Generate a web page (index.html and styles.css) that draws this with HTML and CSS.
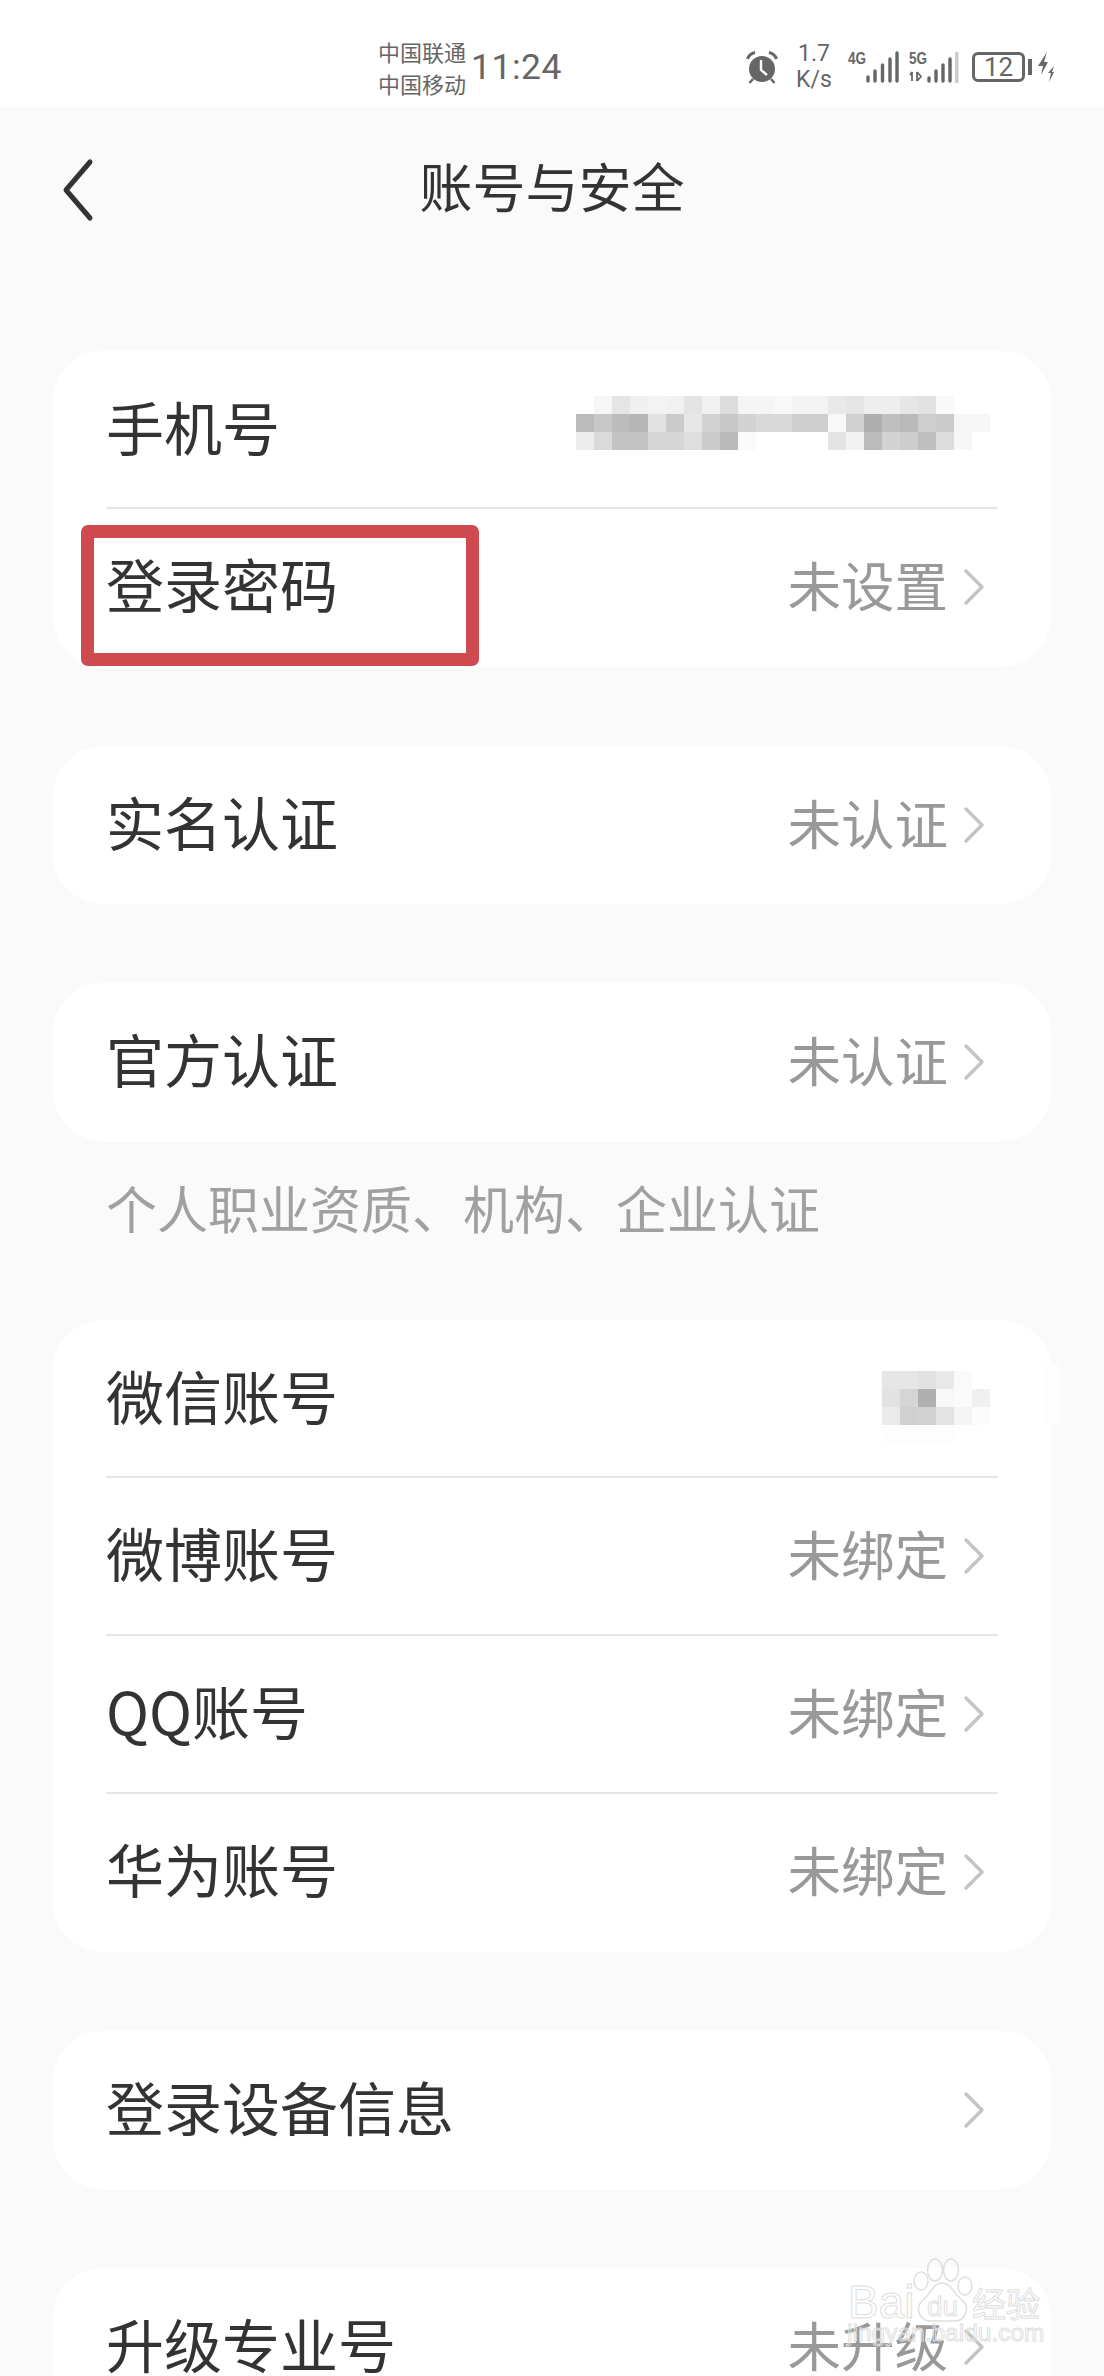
FILE: index.html
```html
<!DOCTYPE html>
<html lang="zh-CN">
<head>
    <meta charset="UTF-8">
    <meta name="viewport" content="width=device-width, initial-scale=1.0">
    <title>账号与安全</title>
    <link rel="stylesheet" href="styles.css">
</head>
<body>
    <div class="phone">
        <!-- 状态栏 -->
        <div class="status-bar">
            <div class="carrier"><span>中国联通</span><span>中国移动</span></div>
            <div class="clock">11:24</div>
            <div class="status-right">
                <svg class="alarm" width="32" height="33" viewBox="0 0 32 33">
                    <circle cx="16" cy="18" r="13" fill="#666"/>
                    <path d="M1.5 8 Q3.5 2.5 9 1.5 M30.5 8 Q28.5 2.5 23 1.5" stroke="#666" stroke-width="3" fill="none"/>
                    <path d="M7 28 L3.5 32 M25 28 L28.5 32" stroke="#666" stroke-width="2.5"/>
                    <path d="M15 9 V19 L21 24" stroke="#fff" stroke-width="2.4" fill="none"/>
                </svg>
                <div class="speed"><span>1.7</span><span>K/s</span></div>
                <svg class="signal" width="113" height="32" viewBox="0 0 113 32">
                    <text x="0" y="13" class="net" textLength="18" lengthAdjust="spacingAndGlyphs">4G</text>
                    <g stroke="#666" stroke-width="3.4" stroke-linecap="round">
                        <path d="M20 30 V26 M27 30 V20 M34.500 30 V14 M42 30 V8 M49 30 V2"/>
                        <path d="M81 30 V27 M88 30 V20 M95 30 V14 M102 30 V8"/>
                    </g>
                    <text x="61" y="13" class="net" textLength="18" lengthAdjust="spacingAndGlyphs">5G</text>
                    <path d="M64 21 V30 M62 24 L64 21 M69 21 V30 M69 21 L73 25.500 L69 30" stroke="#666" stroke-width="1.8" fill="none"/>
                    <rect x="107" y="1" width="3.500" height="31" fill="#ccc"/>
                </svg>
                <div class="battery">12</div>
                <div class="battery-nub"></div>
                <svg class="bolt" width="16" height="30" viewBox="0 0 16 30">
                    <path d="M9 0 L0 14 L5 14 L3 23 L10 10 L6 10 Z M16 14 L10 21 L13 21 L11 30 L16 20 L14 20 Z" fill="#666"/>
                </svg>
            </div>
        </div>

        <!-- 标题 -->
        <div class="title-bar">
            <svg class="back" width="32" height="64" viewBox="0 0 32 64">
                <path d="M28 4 L4 32 L28 60" stroke="#333" stroke-width="5" fill="none" stroke-linecap="round" stroke-linejoin="round"/>
            </svg>
            <h1>账号与安全</h1>
        </div>

        <div class="card">
            <div class="row row-top">
                <span class="label">手机号</span>
                <svg class="mosaic mosaic-phone" width="414" height="54" viewBox="0 0 23 3" shape-rendering="crispEdges">
                    <rect x="1" y="0" width="1" height="1" fill="#f6f6f6"/><rect x="2" y="0" width="1" height="1" fill="#e5e5e5"/><rect x="3" y="0" width="1" height="1" fill="#f0f0f0"/><rect x="4" y="0" width="1" height="1" fill="#f3f3f3"/><rect x="5" y="0" width="1" height="1" fill="#f1f1f1"/><rect x="6" y="0" width="1" height="1" fill="#e4e4e4"/><rect x="7" y="0" width="1" height="1" fill="#f1f1f1"/><rect x="8" y="0" width="1" height="1" fill="#dcdcdc"/><rect x="9" y="0" width="2" height="1" fill="#f5f5f5"/><rect x="11" y="0" width="1" height="1" fill="#f8f8f8"/><rect x="12" y="0" width="2" height="1" fill="#f3f3f3"/><rect x="14" y="0" width="1" height="1" fill="#e9e9e9"/><rect x="15" y="0" width="1" height="1" fill="#e5e5e5"/><rect x="16" y="0" width="2" height="1" fill="#eeeeee"/><rect x="18" y="0" width="1" height="1" fill="#e6e6e6"/><rect x="19" y="0" width="1" height="1" fill="#e2e2e2"/><rect x="20" y="0" width="1" height="1" fill="#f9f9f9"/>
                    <rect x="0" y="1" width="1" height="1" fill="#bbbbbb"/><rect x="1" y="1" width="1" height="1" fill="#c8c8c8"/><rect x="2" y="1" width="1" height="1" fill="#bcbcbc"/><rect x="3" y="1" width="1" height="1" fill="#b6b6b6"/><rect x="4" y="1" width="1" height="1" fill="#e2e2e2"/><rect x="5" y="1" width="1" height="1" fill="#cbcbcb"/><rect x="6" y="1" width="1" height="1" fill="#e7e7e7"/><rect x="7" y="1" width="1" height="1" fill="#d2d2d2"/><rect x="8" y="1" width="1" height="1" fill="#c8c8c8"/><rect x="9" y="1" width="1" height="1" fill="#d3d3d3"/><rect x="10" y="1" width="2" height="1" fill="#d9d9d9"/><rect x="12" y="1" width="2" height="1" fill="#cecece"/><rect x="14" y="1" width="1" height="1" fill="#f8f8f8"/><rect x="15" y="1" width="1" height="1" fill="#d1d1d1"/><rect x="16" y="1" width="1" height="1" fill="#aeaeae"/><rect x="17" y="1" width="1" height="1" fill="#bfbfbf"/><rect x="18" y="1" width="1" height="1" fill="#b9b9b9"/><rect x="19" y="1" width="1" height="1" fill="#cecece"/><rect x="20" y="1" width="1" height="1" fill="#cbcbcb"/><rect x="21" y="1" width="2" height="1" fill="#f6f6f6"/>
                    <rect x="0" y="2" width="1" height="1" fill="#ececec"/><rect x="1" y="2" width="1" height="1" fill="#dadada"/><rect x="2" y="2" width="2" height="1" fill="#c3c3c3"/><rect x="4" y="2" width="2" height="1" fill="#d6d6d6"/><rect x="6" y="2" width="1" height="1" fill="#dedede"/><rect x="7" y="2" width="1" height="1" fill="#cbcbcb"/><rect x="8" y="2" width="1" height="1" fill="#b9b9b9"/><rect x="9" y="2" width="1" height="1" fill="#fafafa"/><rect x="14" y="2" width="1" height="1" fill="#e4e4e4"/><rect x="15" y="2" width="1" height="1" fill="#f2f2f2"/><rect x="16" y="2" width="1" height="1" fill="#bcbcbc"/><rect x="17" y="2" width="1" height="1" fill="#d3d3d3"/><rect x="18" y="2" width="1" height="1" fill="#cdcdcd"/><rect x="19" y="2" width="1" height="1" fill="#bfbfbf"/><rect x="20" y="2" width="1" height="1" fill="#dcdcdc"/><rect x="21" y="2" width="1" height="1" fill="#f7f7f7"/>
                </svg>
            </div>
            <div class="row row-end">
                <span class="label">登录密码</span>
                <span class="value">未设置</span>
                <svg class="arrow" width="22" height="38" viewBox="0 0 22 38"><path d="M3 3 L19 19 L3 35" /></svg>
                <div class="mark-box"></div>
            </div>
        </div>

        <div class="card">
            <div class="row">
                <span class="label">实名认证</span>
                <span class="value">未认证</span>
                <svg class="arrow" width="22" height="38" viewBox="0 0 22 38"><path d="M3 3 L19 19 L3 35" /></svg>
            </div>
        </div>

        <div class="card card-noted">
            <div class="row">
                <span class="label">官方认证</span>
                <span class="value">未认证</span>
                <svg class="arrow" width="22" height="38" viewBox="0 0 22 38"><path d="M3 3 L19 19 L3 35" /></svg>
            </div>
        </div>
        <p class="note">个人职业资质、机构、企业认证</p>

        <div class="card">
            <div class="blur-patch"></div>
            <div class="row row-top">
                <span class="label">微信账号</span>
                <svg class="mosaic mosaic-wechat" width="108" height="72" viewBox="0 0 6 4" shape-rendering="crispEdges">
                    <rect x="0" y="0" width="2" height="1" fill="#e6e6e6"/><rect x="2" y="0" width="1" height="1" fill="#e2e2e2"/><rect x="3" y="0" width="1" height="1" fill="#e9e9e9"/><rect x="4" y="0" width="1" height="1" fill="#fafafa"/>
                    <rect x="0" y="1" width="1" height="1" fill="#e2e2e2"/><rect x="1" y="1" width="1" height="1" fill="#d5d5d5"/><rect x="2" y="1" width="1" height="1" fill="#b0b0b0"/><rect x="3" y="1" width="1" height="1" fill="#f8f8f8"/><rect x="4" y="1" width="1" height="1" fill="#fbfbfb"/><rect x="5" y="1" width="1" height="1" fill="#f0f0f0"/>
                    <rect x="0" y="2" width="1" height="1" fill="#eaeaea"/><rect x="1" y="2" width="1" height="1" fill="#d0d0d0"/><rect x="2" y="2" width="1" height="1" fill="#d2d2d2"/><rect x="3" y="2" width="1" height="1" fill="#e3e3e3"/><rect x="4" y="2" width="1" height="1" fill="#f5f5f5"/><rect x="5" y="2" width="1" height="1" fill="#fcfcfc"/>
                    <rect x="0" y="3" width="4" height="1" fill="#fdfdfd"/>
                </svg>
            </div>
            <div class="row">
                <span class="label">微博账号</span>
                <span class="value">未绑定</span>
                <svg class="arrow" width="22" height="38" viewBox="0 0 22 38"><path d="M3 3 L19 19 L3 35" /></svg>
            </div>
            <div class="row">
                <span class="label">QQ账号</span>
                <span class="value">未绑定</span>
                <svg class="arrow" width="22" height="38" viewBox="0 0 22 38"><path d="M3 3 L19 19 L3 35" /></svg>
            </div>
            <div class="row row-end">
                <span class="label">华为账号</span>
                <span class="value">未绑定</span>
                <svg class="arrow" width="22" height="38" viewBox="0 0 22 38"><path d="M3 3 L19 19 L3 35" /></svg>
            </div>
        </div>

        <div class="card">
            <div class="row">
                <span class="label">登录设备信息</span>
                <svg class="arrow" width="22" height="38" viewBox="0 0 22 38"><path d="M3 3 L19 19 L3 35" /></svg>
            </div>
        </div>

        <div class="card">
            <div class="row">
                <span class="label">升级专业号</span>
                <span class="value">未升级</span>
                <svg class="arrow" width="22" height="38" viewBox="0 0 22 38"><path d="M3 3 L19 19 L3 35" /></svg>
            </div>
        </div>

        <!-- 水印 -->
        <div class="watermark">
            <svg class="paw" width="60" height="66" viewBox="0 0 60 66">
                <ellipse cx="8" cy="23" rx="7" ry="9"/>
                <ellipse cx="22" cy="12" rx="7.500" ry="11"/>
                <ellipse cx="38" cy="12" rx="7.500" ry="11"/>
                <ellipse cx="52" cy="28" rx="7" ry="9"/>
                <path d="M29 25 C20 25 18 36 10 42 C1 50 7 64 19 63 L40 63 C52 64 58 50 49 42 C41 36 38 25 29 25 Z"/>
            </svg>
            <span class="wm-bai">Bai</span>
            <span class="wm-du">du</span>
            <span class="wm-cn">经验</span>
            <span class="wm-url">jingyan.baidu.com</span>
        </div>
    </div>
</body>
</html>
```

FILE: styles.css
```css
* {
    box-sizing: border-box;
}

html, body {
    margin: 0;
    padding: 0;
}

body {
    font-family: "Noto Sans CJK SC", "Noto Sans", sans-serif;
    background-color: #fafafa;
}

.phone {
    position: relative;
    width: 1104px;
    height: 2376px;
    overflow: hidden;
    background-color: #fafafa;
}

/* status bar */
.status-bar {
    height: 107px;
    background-color: #fff;
    color: #666;
    display: flex;
    align-items: center;
    padding: 27px 50px 0 378px;
}

.carrier {
    display: flex;
    flex-direction: column;
    font-size: 22px;
    line-height: 32px;
    width: 93px;
}

.clock {
    font-family: Roboto, sans-serif;
    font-size: 35.500px;
    letter-spacing: 0.5px;
}

.status-right {
    margin-left: auto;
    display: flex;
    align-items: center;
}

.speed {
    display: flex;
    flex-direction: column;
    align-items: center;
    font-family: Roboto, sans-serif;
    font-size: 23px;
    line-height: 26px;
    margin-left: 18px;
    width: 36px;
}

.signal {
    margin-left: 16px;
}

.net {
    font-family: "Liberation Sans", sans-serif;
    font-size: 16px;
    font-weight: bold;
    fill: #666;
}

.battery {
    width: 53px;
    height: 30px;
    border: 3px solid #666;
    border-radius: 6px;
    margin-left: 11px;
    font-family: Roboto, sans-serif;
    font-size: 26px;
    line-height: 24px;
    text-align: center;
}

.battery-nub {
    width: 4px;
    height: 16px;
    background-color: #666;
    margin-left: 3px;
}

.bolt {
    margin-left: 6px;
}

/* title */
.title-bar {
    position: relative;
    height: 244px;
    padding-top: 49px;
    display: flex;
    justify-content: center;
}

.title-bar h1 {
    margin: 0;
    font-size: 53px;
    line-height: 58px;
    font-weight: 400;
    color: #333;
}

.back {
    position: absolute;
    left: 62px;
    top: 51px;
}

/* cards */
.card {
    position: relative;
    margin: 0 53px 79px;
    background-color: #fff;
    border-radius: 50px;
}

.card-noted {
    margin-bottom: 0;
}

.row {
    position: relative;
    height: 158px;
    margin: 0 53px;
    display: flex;
    align-items: center;
}

.row + .row {
    border-top: 2px solid #e6e6e6;
}

.row-top {
    height: 156px;
    padding-top: 2px;
}

.row-end {
    height: 160px;
    padding-bottom: 2px;
}

.label {
    font-size: 58px;
    line-height: 70px;
    margin-bottom: 9px;
    color: #333;
}

.value {
    margin-left: auto;
    margin-bottom: 6px;
    font-size: 53.5px;
    line-height: 70px;
    color: #999;
}

.arrow {
    margin-left: 15px;
    margin-right: 13px;
}

.label + .arrow {
    margin-left: auto;
}

.arrow path {
    fill: none;
    stroke: #c4c4c4;
    stroke-width: 3.5;
    stroke-linecap: round;
    stroke-linejoin: round;
}

.mosaic {
    margin-left: auto;
    margin-right: 8px;
}

.mosaic-phone {
    margin-bottom: 14px;
}

.mosaic-wechat {
    margin-top: 16px;
}

.mark-box {
    position: absolute;
    left: -25px;
    top: 16px;
    width: 398px;
    height: 141px;
    border: 13px solid #cf4a4e;
    border-radius: 7px;
}

.blur-patch {
    position: absolute;
    right: -9px;
    top: 44px;
    width: 17px;
    height: 60px;
    background-color: #fdfdfd;
}

.note {
    margin: 0;
    height: 179px;
    padding: 35px 0 0 106px;
    font-size: 51px;
    line-height: 62px;
    color: #a0a0a0;
}

/* baidu watermark */
.watermark {
    position: absolute;
    left: 848px;
    top: 2258px;
    width: 200px;
    height: 100px;
    color: transparent;
    -webkit-text-stroke: 1px #dedede;
    font-family: "Liberation Sans", sans-serif;
    white-space: nowrap;
}

.paw {
    position: absolute;
    left: 65px;
    top: 0;
}

.paw ellipse, .paw path {
    fill: none;
    stroke: #dedede;
    stroke-width: 1.5;
}

.wm-bai {
    position: absolute;
    left: 0;
    top: 19px;
    font-size: 46px;
    line-height: 50px;
}

.wm-du {
    position: absolute;
    left: 79px;
    top: 34px;
    font-size: 28px;
    line-height: 30px;
}

.wm-cn {
    position: absolute;
    left: 124px;
    top: 23px;
    font-family: "Noto Sans CJK SC", sans-serif;
    font-size: 34px;
    line-height: 44px;
}

.wm-url {
    position: absolute;
    left: -1px;
    top: 61px;
    font-size: 24.500px;
    line-height: 28px;
}
```
